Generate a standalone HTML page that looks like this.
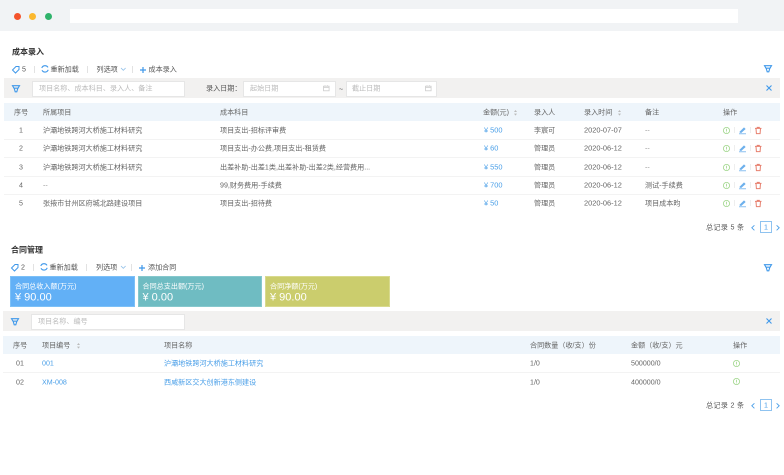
<!DOCTYPE html>
<html lang="zh"><head><meta charset="utf-8"><title>成本录入</title>
<style>
html,body{margin:0;padding:0;background:#fff}
#p{position:relative;width:784px;height:475px;overflow:hidden;background:#fff;font-family:"Liberation Sans","Noto Sans CJK SC",sans-serif;font-size:7.1px;color:#666;filter:blur(.35px)}
#p div{position:absolute;box-sizing:border-box}
.t{position:absolute;white-space:nowrap;transform:translateY(calc(-50% + .5px));line-height:10px}
.b{color:#4a9fe8}.g{color:#999}.l{color:#bbb}.d{color:#555}
.sep{position:absolute;width:1px;height:7px;background:#e2e2e2}
svg{position:absolute;overflow:visible}
.a{color:#4a9fe8;font-size:7.4px}
</style></head><body><div id="p">
<svg width="0" height="0" style="position:absolute"><defs>
<g id="fil" fill="none" stroke="#3f98ea" stroke-width="1.1"><path d="M.5 .7H7.5L6 3.2H2Z"/><path d="M2.2 3.4 3.2 6.8H4.8L5.8 3.4"/></g>
<g id="x" fill="none" stroke="#3f98ea" stroke-width="1.1"><path d="M.5 .5 5.5 5.5M5.5 .5 .5 5.5"/></g>
<g id="tag" fill="none" stroke="#3f98ea" stroke-width="1"><path d="M.5 4 4 .5H7V3.5L3.5 7Z"/></g>
<g id="ref" fill="none" stroke="#3f98ea" stroke-width="1.1"><path d="M.8 3A3.4 3.4 0 0 1 7 2.4M7.2 4.8A3.4 3.4 0 0 1 1 5.2"/></g>
<g id="plus" stroke="#3f98ea" stroke-width="1.2"><path d="M3 0V6M0 3H6"/></g>
<g id="info" fill="none" stroke="#9fd68a" stroke-width=".8"><circle cx="3.5" cy="3.5" r="3.1"/><path d="M3.5 1.8V4.2M3.5 4.8V5.4"/></g>
<g id="ed" fill="none" stroke="#6db0ec" stroke-width=".9"><path d="M1 5 5 1 6 2 2 5.6Z" fill="#6db0ec"/><path d="M0 6.8H7" stroke-width=".8"/></g>
<g id="del" fill="none" stroke="#e7806f" stroke-width="1"><path d="M0 1.4H6.5M2.2 1.2V.4H4.3V1.2M1 1.5 1.4 6.6H5.1L5.5 1.5"/></g>
<g id="cal" fill="none" stroke="#ccc" stroke-width=".8"><rect x=".5" y="1.2" width="5.6" height="4.6"/><path d="M.5 2.6H6.1M2 .3V1.4M4.6 .3V1.4"/></g>
<g id="sort" fill="#bbb"><path d="M0 2 1.5 0 3 2ZM0 3.6H3L1.5 5.6Z"/></g>
</defs></svg>

<div style="left:0;top:0;width:784px;height:31px;background:#f1f3f5"></div>
<div style="left:70px;top:9px;width:668px;height:14px;background:#fff"></div>
<div style="left:13.5px;top:13px;width:7px;height:7px;border-radius:50%;background:#f4532c"></div>
<div style="left:28.5px;top:13px;width:7px;height:7px;border-radius:50%;background:#fbb82e"></div>
<div style="left:44.5px;top:13px;width:7px;height:7px;border-radius:50%;background:#2fb36b"></div>

<span class="t" style="left:12px;top:52px;font-size:8px;font-weight:bold;color:#333">成本录入</span>
<svg style="left:11.5px;top:65.5px" width="8" height="8"><use href="#tag"/></svg>
<span class="t d" style="left:22px;top:69px">5</span><i class="sep" style="left:34px;top:66px"></i>
<svg style="left:40.5px;top:65px" width="8" height="8"><use href="#ref"/></svg>
<span class="t d" style="left:50.5px;top:69px">重新加载</span><i class="sep" style="left:87px;top:66px"></i>
<span class="t d" style="left:96.5px;top:69px">列选项</span>
<svg style="left:121px;top:68px" width="5" height="3"><path d="M0 0 2.3 2.3 4.6 0" fill="none" stroke="#8fbfe8" stroke-width=".8"/></svg><i class="sep" style="left:132px;top:66px"></i>
<svg style="left:140px;top:66.5px" width="6" height="6"><use href="#plus"/></svg>
<span class="t d" style="left:148.5px;top:69px">成本录入</span>
<svg style="left:764px;top:65px" width="8" height="8"><use href="#fil"/></svg>

<div style="left:4px;top:78px;width:776px;height:20px;background:#f2f1f0"></div>
<svg style="left:11.5px;top:85px" width="8" height="8"><use href="#fil"/></svg>
<div style="left:32px;top:80.5px;width:152.5px;height:16px;background:#fff;border:.5px solid #e6e6e6"></div>
<span class="t l" style="left:39px;top:88px">项目名称、成本科目、录入人、备注</span>
<span class="t d" style="left:206px;top:88px">录入日期：</span>
<div style="left:243px;top:80.5px;width:93px;height:16px;background:#fff;border:.5px solid #e6e6e6"></div>
<span class="t l" style="left:250px;top:88px">起始日期</span>
<svg style="left:323px;top:85px" width="7" height="7"><use href="#cal"/></svg>
<span class="t d" style="left:339px;top:88.5px">~</span>
<div style="left:345.5px;top:80.5px;width:91.5px;height:16px;background:#fff;border:.5px solid #e6e6e6"></div>
<span class="t l" style="left:352px;top:88px">截止日期</span>
<svg style="left:425px;top:85px" width="7" height="7"><use href="#cal"/></svg>
<svg style="left:765.5px;top:85px" width="6" height="6"><use href="#x"/></svg>

<div style="left:4px;top:103px;width:776px;height:18px;background:#eef5fb"></div>
<span class="t" style="left:14px;top:111.5px">序号</span>
<span class="t" style="left:43px;top:111.5px">所属项目</span>
<span class="t" style="left:220px;top:111.5px">成本科目</span>
<span class="t" style="left:483px;top:111.5px">金额(元)</span><svg style="left:514px;top:109.5px" width="3" height="6"><use href="#sort"/></svg>
<span class="t" style="left:534px;top:111.5px">录入人</span>
<span class="t" style="left:584px;top:111.5px">录入时间</span><svg style="left:618px;top:109.5px" width="3" height="6"><use href="#sort"/></svg>
<span class="t" style="left:645px;top:111.5px">备注</span>
<span class="t" style="left:723px;top:111.5px">操作</span>

<div style="left:4px;top:139px;width:776px;height:1px;background:#f3f3f3"></div>
<div style="left:4px;top:157px;width:776px;height:1px;background:#f3f3f3"></div>
<div style="left:4px;top:176px;width:776px;height:1px;background:#f3f3f3"></div>
<div style="left:4px;top:194px;width:776px;height:1px;background:#f3f3f3"></div>

<span class="t" style="left:19px;top:130px">1</span><span class="t" style="left:43px;top:130px">沪灞地铁跨河大桥施工材料研究</span><span class="t" style="left:220px;top:130px">项目支出-招标评审费</span><span class="t a" style="left:484px;top:130px">¥ 500</span><span class="t" style="left:534px;top:130px">李宸可</span><span class="t" style="left:584px;top:130px;font-size:7.4px">2020-07-07</span><span class="t g" style="left:645px;top:130px">--</span>
<span class="t" style="left:19px;top:148px">2</span><span class="t" style="left:43px;top:148px">沪灞地铁跨河大桥施工材料研究</span><span class="t" style="left:220px;top:148px">项目支出-办公费,项目支出-租赁费</span><span class="t a" style="left:484px;top:148px">¥ 60</span><span class="t" style="left:534px;top:148px">管理员</span><span class="t" style="left:584px;top:148px;font-size:7.4px">2020-06-12</span><span class="t g" style="left:645px;top:148px">--</span>
<span class="t" style="left:19px;top:167px">3</span><span class="t" style="left:43px;top:167px">沪灞地铁跨河大桥施工材料研究</span><span class="t" style="left:220px;top:167px">出差补助-出差1类,出差补助-出差2类,经营费用...</span><span class="t a" style="left:484px;top:167px">¥ 550</span><span class="t" style="left:534px;top:167px">管理员</span><span class="t" style="left:584px;top:167px;font-size:7.4px">2020-06-12</span><span class="t g" style="left:645px;top:167px">--</span>
<span class="t" style="left:19px;top:185px">4</span><span class="t g" style="left:43px;top:185px">--</span><span class="t" style="left:220px;top:185px">99,财务费用-手续费</span><span class="t a" style="left:484px;top:185px">¥ 700</span><span class="t" style="left:534px;top:185px">管理员</span><span class="t" style="left:584px;top:185px;font-size:7.4px">2020-06-12</span><span class="t" style="left:645px;top:185px">测试-手续费</span>
<span class="t" style="left:19px;top:203px">5</span><span class="t" style="left:43px;top:203px">张掖市甘州区府城北路建设项目</span><span class="t" style="left:220px;top:203px">项目支出-招待费</span><span class="t a" style="left:484px;top:203px">¥ 50</span><span class="t" style="left:534px;top:203px">管理员</span><span class="t" style="left:584px;top:203px;font-size:7.4px">2020-06-12</span><span class="t" style="left:645px;top:203px">项目成本昀</span>

<svg style="left:723px;top:126.5px" width="7" height="7"><use href="#info"/></svg><i class="sep" style="left:734px;top:127px;background:#eee;height:6px"></i><svg style="left:739px;top:126.5px" width="7" height="7"><use href="#ed"/></svg><i class="sep" style="left:750px;top:127px;background:#eee;height:6px"></i><svg style="left:755px;top:126.5px" width="7" height="7"><use href="#del"/></svg>
<svg style="left:723px;top:145px" width="7" height="7"><use href="#info"/></svg><i class="sep" style="left:734px;top:145px;background:#eee;height:6px"></i><svg style="left:739px;top:145px" width="7" height="7"><use href="#ed"/></svg><i class="sep" style="left:750px;top:145px;background:#eee;height:6px"></i><svg style="left:755px;top:145px" width="7" height="7"><use href="#del"/></svg>
<svg style="left:723px;top:163.5px" width="7" height="7"><use href="#info"/></svg><i class="sep" style="left:734px;top:164px;background:#eee;height:6px"></i><svg style="left:739px;top:163.5px" width="7" height="7"><use href="#ed"/></svg><i class="sep" style="left:750px;top:164px;background:#eee;height:6px"></i><svg style="left:755px;top:163.5px" width="7" height="7"><use href="#del"/></svg>
<svg style="left:723px;top:181.5px" width="7" height="7"><use href="#info"/></svg><i class="sep" style="left:734px;top:182px;background:#eee;height:6px"></i><svg style="left:739px;top:181.5px" width="7" height="7"><use href="#ed"/></svg><i class="sep" style="left:750px;top:182px;background:#eee;height:6px"></i><svg style="left:755px;top:181.5px" width="7" height="7"><use href="#del"/></svg>
<svg style="left:723px;top:200px" width="7" height="7"><use href="#info"/></svg><i class="sep" style="left:734px;top:200px;background:#eee;height:6px"></i><svg style="left:739px;top:200px" width="7" height="7"><use href="#ed"/></svg><i class="sep" style="left:750px;top:200px;background:#eee;height:6px"></i><svg style="left:755px;top:200px" width="7" height="7"><use href="#del"/></svg>

<span class="t d" style="left:706px;top:227px;letter-spacing:.3px">总记录 5 条</span>
<svg style="left:751px;top:224.5px" width="4" height="6"><path d="M3.4 .3 .8 2.8 3.4 5.3" fill="none" stroke="#4a9fe8" stroke-width=".9"/></svg>
<div style="left:759.5px;top:221px;width:12px;height:12px;border:1px solid #8fc3f0"></div>
<span class="t b" style="left:764px;top:227px">1</span>
<svg style="left:776px;top:224.5px" width="4" height="6"><path d="M.6 .3 3.2 2.8 .6 5.3" fill="none" stroke="#4a9fe8" stroke-width=".9"/></svg>

<span class="t" style="left:11px;top:250px;font-size:8px;font-weight:bold;color:#333">合同管理</span>
<svg style="left:10.5px;top:263.5px" width="8" height="8"><use href="#tag"/></svg>
<span class="t d" style="left:21px;top:267px">2</span><i class="sep" style="left:33px;top:264px"></i>
<svg style="left:39.5px;top:263px" width="8" height="8"><use href="#ref"/></svg>
<span class="t d" style="left:49.5px;top:267px">重新加载</span><i class="sep" style="left:86px;top:264px"></i>
<span class="t d" style="left:96px;top:267px">列选项</span>
<svg style="left:120.5px;top:266px" width="5" height="3"><path d="M0 0 2.3 2.3 4.6 0" fill="none" stroke="#8fbfe8" stroke-width=".8"/></svg><i class="sep" style="left:131px;top:264px"></i>
<svg style="left:139px;top:264.5px" width="6" height="6"><use href="#plus"/></svg>
<span class="t d" style="left:148px;top:267px">添加合同</span>
<svg style="left:764px;top:263.5px" width="8" height="8"><use href="#fil"/></svg>

<div style="left:10px;top:276px;width:125px;height:31px;background:#62b0f6;border:1px solid #7cc0f7"></div>
<div style="left:138px;top:276px;width:124px;height:31px;background:#6fbcc2;border:1px solid #86c8cd"></div>
<div style="left:265px;top:276px;width:125px;height:31px;background:#cbcd6d;border:1px solid #d8da8e"></div>
<span class="t" style="left:15px;top:285.5px;color:#fff">合同总收入额(万元)</span><span class="t" style="left:15px;top:296.5px;color:#fff;font-size:11px">¥ 90.00</span>
<span class="t" style="left:142.5px;top:285.5px;color:#fff">合同总支出额(万元)</span><span class="t" style="left:142.5px;top:296.5px;color:#fff;font-size:11px">¥ 0.00</span>
<span class="t" style="left:270px;top:285.5px;color:#fff">合同净额(万元)</span><span class="t" style="left:270px;top:296.5px;color:#fff;font-size:11px">¥ 90.00</span>

<div style="left:3px;top:311px;width:777px;height:20px;background:#f2f1f0"></div>
<svg style="left:10.5px;top:317.5px" width="8" height="8"><use href="#fil"/></svg>
<div style="left:31px;top:313.5px;width:153.5px;height:16px;background:#fff;border:.5px solid #e6e6e6"></div>
<span class="t l" style="left:38px;top:321px">项目名称、编号</span>
<svg style="left:765.5px;top:318px" width="6" height="6"><use href="#x"/></svg>

<div style="left:3px;top:336px;width:777px;height:17.5px;background:#eef5fb"></div>
<span class="t" style="left:13px;top:344.5px">序号</span>
<span class="t" style="left:42px;top:344.5px">项目编号</span><svg style="left:76.5px;top:342.5px" width="3" height="6"><use href="#sort"/></svg>
<span class="t" style="left:164px;top:344.5px">项目名称</span>
<span class="t" style="left:530px;top:344.5px">合同数量（收/支）份</span>
<span class="t" style="left:631px;top:344.5px">金额（收/支）元</span>
<span class="t" style="left:733px;top:344.5px">操作</span>

<div style="left:3px;top:372px;width:777px;height:1px;background:#f3f3f3"></div>
<span class="t" style="left:16px;top:363px">01</span><span class="t b" style="left:42px;top:363px">001</span><span class="t b" style="left:164px;top:363px">沪灞地铁跨河大桥施工材料研究</span><span class="t" style="left:530px;top:363px">1/0</span><span class="t" style="left:631px;top:363px">500000/0</span>
<svg style="left:733px;top:359.5px" width="7" height="7"><use href="#info"/></svg>
<span class="t" style="left:16px;top:381.5px">02</span><span class="t b" style="left:42px;top:381.5px">XM-008</span><span class="t b" style="left:164px;top:381.5px">西咸新区交大创新港东侧建设</span><span class="t" style="left:530px;top:381.5px">1/0</span><span class="t" style="left:631px;top:381.5px">400000/0</span>
<svg style="left:733px;top:378px" width="7" height="7"><use href="#info"/></svg>

<span class="t d" style="left:706px;top:405px;letter-spacing:.3px">总记录 2 条</span>
<svg style="left:751px;top:402.5px" width="4" height="6"><path d="M3.4 .3 .8 2.8 3.4 5.3" fill="none" stroke="#4a9fe8" stroke-width=".9"/></svg>
<div style="left:759.5px;top:399px;width:12px;height:12px;border:1px solid #8fc3f0"></div>
<span class="t b" style="left:764px;top:405px">1</span>
<svg style="left:776px;top:402.5px" width="4" height="6"><path d="M.6 .3 3.2 2.8 .6 5.3" fill="none" stroke="#4a9fe8" stroke-width=".9"/></svg>
</div></body></html>
